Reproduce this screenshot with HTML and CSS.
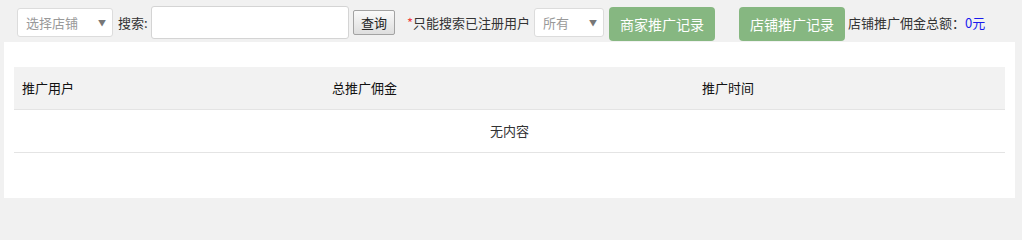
FILE: index.html
```html
<!DOCTYPE html>
<html lang="zh-CN">
<head>
<meta charset="utf-8">
<title>推广记录</title>
<link rel="stylesheet" href="styles.css">
</head>
<body>
<div class="toolbar">
  <div class="select shop-select"><span class="select-text">选择店铺</span><span class="arrow">▼</span></div>
  <span class="label search-label">搜索:</span>
  <input class="search-input" type="text">
  <button class="query-btn" type="button">查询</button>
  <span class="label note"><span class="star">*</span>只能搜索已注册用户</span>
  <div class="select all-select"><span class="select-text">所有</span><span class="arrow">▼</span></div>
  <button class="green-btn btn-merchant" type="button">商家推广记录</button>
  <button class="green-btn btn-shop" type="button">店铺推广记录</button>
  <span class="label total">店铺推广佣金总额：<span class="amount">0元</span></span>
</div>
<div class="panel">
  <table class="grid">
    <thead>
      <tr>
        <th class="col-user">推广用户</th>
        <th class="col-money">总推广佣金</th>
        <th class="col-time">推广时间</th>
      </tr>
    </thead>
    <tbody>
      <tr>
        <td class="empty" colspan="3">无内容</td>
      </tr>
    </tbody>
  </table>
</div>
</body>
</html>
```
FILE: styles.css
```css
html, body {
  margin: 0;
  padding: 0;
}
html {
  background: #f1f1f1;
}
body {
  background: #f1f1f1;
  font-family: "Noto Sans CJK SC", "Noto Sans", sans-serif;
  font-size: 13px;
  color: #333;
  width: 1022px;
  height: 203px;
  overflow: hidden;
}
.toolbar {
  display: flex;
  align-items: flex-start;
  height: 42px;
}
.label {
  line-height: 20px;
  margin-top: 13px;
  white-space: nowrap;
  color: #333;
}
.select {
  box-sizing: border-box;
  height: 29px;
  margin-top: 8px;
  background: #fff;
  border: 1px solid #dcdcdc;
  border-radius: 3px;
  display: flex;
  align-items: center;
  justify-content: space-between;
  padding: 0 6px 0 8px;
  color: #999;
  font-size: 13px;
}
.select-text {
  line-height: 20px;
}
.arrow {
  font-size: 8px;
  color: #777;
  line-height: 10px;
}
.shop-select {
  margin-left: 17px;
  width: 96px;
}
.search-label {
  margin-left: 5px;
  width: 33px;
}
.search-input {
  box-sizing: border-box;
  width: 198px;
  height: 33px;
  margin: 6px 0 0 0;
  border: 1px solid #d4d4d4;
  border-radius: 3px;
  background: #fff;
  padding: 0 6px;
  outline: none;
}
.query-btn {
  box-sizing: border-box;
  width: 42px;
  height: 25px;
  margin: 10px 0 0 4px;
  padding: 0;
  border: 1px solid #a3a3a3;
  border-radius: 2px;
  background: linear-gradient(#fafafa, #dedede);
  font-family: "Noto Sans CJK SC", sans-serif;
  font-size: 13px;
  color: #222;
  line-height: 21px;
}
.note {
  margin-left: 12px;
}
.star {
  color: #f04040;
}
.all-select {
  margin-left: 4px;
  width: 70px;
}
.green-btn {
  box-sizing: border-box;
  width: 106px;
  height: 34px;
  margin-top: 7px;
  padding: 0;
  border: none;
  border-radius: 4px;
  background: #86b781;
  color: #fff;
  font-family: "Noto Sans CJK SC", sans-serif;
  font-size: 14px;
  line-height: 34px;
}
.btn-merchant {
  margin-left: 5px;
}
.btn-shop {
  margin-left: 24px;
}
.total {
  margin-left: 3px;
}
.amount {
  color: #1a1aee;
}
.panel {
  box-sizing: border-box;
  margin-left: 4px;
  width: 1011px;
  height: 156px;
  background: #fff;
  padding: 25px 10px 0 10px;
}
.grid {
  width: 991px;
  border-collapse: collapse;
  table-layout: fixed;
}
.grid th,
.grid td {
  height: 42px;
  padding: 0 8px;
  line-height: 20px;
  border-bottom: 1px solid #e4e4e4;
  font-size: 13px;
}
.grid th {
  background: #f2f2f2;
  text-align: left;
  font-weight: normal;
  color: #111;
}
.col-user { width: 294px; }
.col-money { width: 354px; }
.col-time { width: auto; }
.grid td.empty {
  text-align: center;
  color: #333;
}
```
